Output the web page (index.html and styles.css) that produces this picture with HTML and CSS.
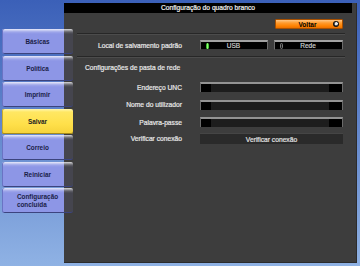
FILE: index.html
```html
<!DOCTYPE html>
<html lang="pt">

<head>
  <meta charset="UTF-8" />
  <meta name="viewport" content="width=device-width, initial-scale=1.0" />
  <title>Configuração do quadro branco</title>
  <link rel="stylesheet" href="styles.css">
</head>

<body>
  <div class="screen">
    <nav class="menu">
      <button class="menu-item">Básicas</button>
      <button class="menu-item">Política</button>
      <button class="menu-item">Imprimir</button>
      <button class="menu-item current">Salvar</button>
      <button class="menu-item">Correio</button>
      <button class="menu-item">Reiniciar</button>
      <button class="menu-item"><span class="two-lines">Configuração<br>concluída</span></button>
    </nav>

    <main class="panel">
      <div class="panel-title">Configuração do quadro branco</div>
      <div class="panel-body">
        <div class="back-row">
          <button class="back-btn"><span class="back-text">Voltar</span><i class="back-icon"></i></button>
        </div>

        <div class="sep"></div>

        <div class="row">
          <span class="label">Local de salvamento padrão</span>
          <div class="choice">
            <button class="toggle on"><i class="led"></i><span>USB</span></button>
            <button class="toggle"><i class="led"></i><span>Rede</span></button>
          </div>
        </div>

        <div class="sep sep-2"></div>

        <div class="section-title">Configurações de pasta de rede</div>

        <div class="row field-row first">
          <span class="label">Endereço UNC</span>
          <div class="field"></div>
        </div>
        <div class="row field-row">
          <span class="label">Nome do utilizador</span>
          <div class="field"></div>
        </div>
        <div class="row field-row">
          <span class="label">Palavra-passe</span>
          <div class="field"></div>
        </div>
        <div class="row field-row last">
          <span class="label">Verificar conexão</span>
          <button class="check-btn">Verificar conexão</button>
        </div>
      </div>
    </main>
  </div>
</body>

</html>
```

FILE: styles.css
```css
body {
  margin: 0;
  width: 360px;
  height: 266px;
  overflow: hidden;
  background: linear-gradient(#3b60b8, #8fb2e4);
  font-family: "Liberation Sans", Arial, sans-serif;
}

button {
  font: inherit;
  border: 0;
  padding: 0;
  cursor: pointer;
}

.screen {
  display: flex;
  height: 266px;
}

/* menu lateral */
.menu {
  position: relative;
  z-index: 1;
  flex-shrink: 0;
  width: 71px;
  padding: 29px 0 0 2px;
  display: flex;
  flex-direction: column;
  gap: 1.5px;
}

.menu-item {
  height: 25px;
  width: 71px;
  border-radius: 2px;
  background:
    linear-gradient(rgba(255, 255, 255, 0.8) 0, rgba(255, 255, 255, 0.15) 3px, rgba(255, 255, 255, 0) 5px),
    linear-gradient(to right, #8d96e6 0 62px, #45454e 62px);
  box-shadow: inset 1px 0 0 #6a73c4, inset 0 -1px 0 #3c447e;
  color: #1b1e48;
  font-size: 6.4px;
  font-weight: bold;
  text-align: center;
}

.menu-item.current {
  background: linear-gradient(#fff7b0 0, #ffe763 3px, #ffe04a 60%, #f5d23a);
  box-shadow: inset 0 -1px 0 #a48a1c, inset 1px 0 0 #c9ad2c;
  color: #222;
}

.two-lines {
  display: inline-block;
  text-align: left;
  line-height: 8px;
}

/* painel */
.panel {
  margin: 3px 0 0 -9px;
  width: 293px;
  height: 260px;
  background: #3d3d3d;
  box-shadow: inset -1px -1px 0 #2c2c2c;
}

.panel-title {
  width: 288px;
  height: 10px;
  line-height: 10px;
  background: #000;
  color: #f2f2f2;
  font-size: 6.7px;
  text-align: center;
  -webkit-text-stroke: 0.2px #f2f2f2;
}

.panel-body {
  width: 288px;
  color: #e8e8e8;
  font-size: 6.7px;
  -webkit-text-stroke: 0.2px #e8e8e8;
}

.back-row {
  display: flex;
  justify-content: flex-end;
  padding: 6px 9px 0 0;
}

.back-btn {
  width: 68px;
  height: 10px;
  box-sizing: border-box;
  display: flex;
  align-items: center;
  border: 1px solid #a85000;
  border-radius: 1px;
  background: linear-gradient(#ffc684 0, #ff9a2c 3px, #ff8200 6px, #ea7000);
  color: #000;
  font-size: 6.5px;
  font-weight: bold;
  -webkit-text-stroke: 0;
}

.back-text {
  flex: 1;
  text-align: center;
  padding-left: 6px;
}

.back-icon {
  width: 6px;
  height: 6px;
  margin-right: 3px;
  border-radius: 50%;
  background: radial-gradient(circle at 55% 45%, #e8e8e8 0 1.3px, #555 1.6px 2px, #111 2.3px);
}

.sep {
  margin: 4px 7px 0 13px;
  border-top: 1px solid #272727;
  border-bottom: 1px solid #4c4c4c;
}

.sep-2 {
  margin-top: 6px;
}

.row {
  display: grid;
  grid-template-columns: 118px 143px;
  column-gap: 18px;
  align-items: center;
  height: 10px;
  margin-top: 5px;
}

.label {
  text-align: right;
  white-space: nowrap;
}

.choice {
  display: flex;
  gap: 6px;
}

.toggle {
  flex: 68px 0 0;
  height: 10px;
  box-sizing: border-box;
  display: flex;
  align-items: center;
  background: #000;
  border: 1px solid #6c6c6c;
  border-top: 2px solid #a2a2a2;
  border-bottom-color: #3a3a3a;
  color: #cfcfcf;
  font-size: 6.5px;
  -webkit-text-stroke: 0.2px #cfcfcf;
}

.toggle + .toggle {
  flex-basis: 69px;
}

.toggle span {
  flex: 1;
  text-align: center;
  padding-right: 9px;
}

.led {
  width: 3px;
  height: 6px;
  margin-left: 5px;
  box-sizing: border-box;
  border-radius: 1.5px;
  border: 1px solid #7a7a7a;
  background: #1e1e1e;
}

.toggle.on .led {
  border: 0;
  background: linear-gradient(to right, #149a14, #8dff70, #1faa1a);
}

.section-title {
  margin: 5px 0 0 21px;
  height: 10px;
  line-height: 10px;
}

.field-row {
  margin-top: 7.5px;
}

.field-row.first {
  margin-top: 9px;
}

.field-row.last {
  height: 11px;
  margin-top: 6px;
}

.field {
  height: 10px;
  box-sizing: border-box;
  border: 1px solid #6a6a6a;
  border-top: 2px solid #939393;
  border-bottom: 0;
  background: linear-gradient(to right, #000 0 10px, #1d1d1d 10px 128px, #000 128px);
}

.check-btn {
  height: 11px;
  background: #2a2a2a;
  border-top: 1px solid #454545;
  color: #e2e2e2;
  font-size: 6.7px;
  text-align: center;
  -webkit-text-stroke: 0.2px #e2e2e2;
}
```
